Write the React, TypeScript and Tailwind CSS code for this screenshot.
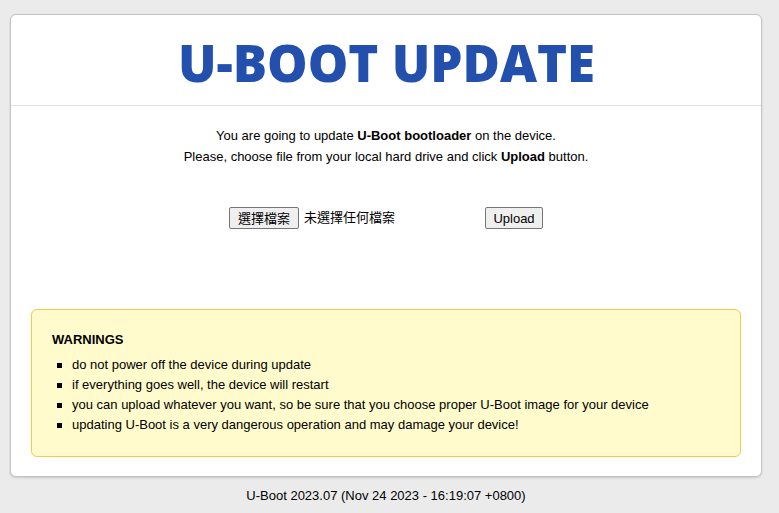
import React from "react";

export default function App() {
  const sans = { fontFamily: '"Liberation Sans", Arial, sans-serif' };
  const cjk = { fontFamily: '"Liberation Sans", "Noto Sans CJK TC", sans-serif' };
  return (
    <div className="min-h-[513px] w-[779px] bg-[#ebebeb] pt-[14px] text-[13px] text-black" style={sans}>
      <div className="ml-[10px] w-[752px] rounded-[6px] border border-[#c4c4c4] bg-white shadow-[0_1px_2px_rgba(0,0,0,0.15)]">
        <div className="flex h-[91px] items-center justify-center border-b border-[#e3e3e3]">
          <h1
            className="pl-[1px] pt-[5px] text-[51px] font-bold leading-none text-[#2350ad]"
            style={{ fontFamily: '"Open Sans", "Noto Sans", sans-serif', fontWeight: 800 }}
          >
            U-BOOT UPDATE
          </h1>
        </div>
        <div className="px-[20px] pb-[19px] pt-[19px]">
          <div className="text-center leading-[21px]">
            <p>
              You are going to update <b>U-Boot bootloader</b> on the device.
            </p>
            <p>
              Please, choose file from your local hard drive and click <b>Upload</b> button.
            </p>
          </div>
          <div className="mt-[40px] flex items-center justify-center">
            <div className="flex w-[256px] items-center">
              <button
                className="h-[22px] rounded-[2px] border border-[#767676] bg-[#efefef] px-[8px] text-[13px] leading-none"
                style={cjk}
              >
                選擇檔案
              </button>
              <span className="ml-[5px]" style={cjk}>
                未選擇任何檔案
              </span>
            </div>
            <button className="h-[22px] w-[58px] rounded-[2px] border border-[#767676] bg-[#efefef] text-[13px] leading-none">
              Upload
            </button>
          </div>
          <div className="mt-[80px] rounded-[6px] border border-[#f5c94c] bg-[#fffbcc] px-[20px] pb-[21px] pt-[21px]">
            <h3 className="text-[13px] font-bold leading-[18px]">WARNINGS</h3>
            <ul className="mt-[6px] leading-[20px]">
              {[
                "do not power off the device during update",
                "if everything goes well, the device will restart",
                "you can upload whatever you want, so be sure that you choose proper U-Boot image for your device",
                "updating U-Boot is a very dangerous operation and may damage your device!",
              ].map((t) => (
                <li key={t} className="flex items-center">
                  <span className="ml-[5px] mr-[10px] inline-block h-[5px] w-[5px] bg-black" />
                  <span>{t}</span>
                </li>
              ))}
            </ul>
          </div>
        </div>
      </div>
      <div className="ml-[10px] w-[752px] pt-[11px] text-center leading-[15px]">
        U-Boot 2023.07 (Nov 24 2023 - 16:19:07 +0800)
      </div>
    </div>
  );
}
